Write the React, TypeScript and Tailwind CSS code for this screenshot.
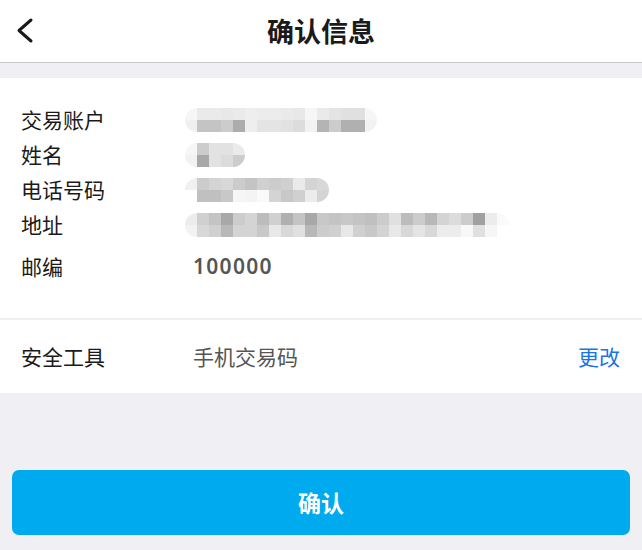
const cjk = "font-['PingFang_SC','Noto_Sans_CJK_SC',sans-serif]";

// mosaic blocks that stand in for the masked personal data
const mosaics: Record<string, string[][]> = {
  account: [
    ["f6", "ea", "ea", "e8", "ea", "ee", "ec", "ec", "ea", "e8", "f6", "ea", "e4", "e0", "e0", "f6"],
    ["f0", "c4", "c4", "cc", "ac", "ee", "e4", "e4", "e2", "dc", "f2", "b4", "cc", "b0", "b0", "f2"],
  ],
  name: [
    ["f6", "cc", "e2", "e2", "ea"],
    ["f2", "a8", "e2", "dc", "cc"],
  ],
  phone: [
    ["f0", "cc", "d4", "d8", "cc", "c4", "d0", "cc", "d0", "ea", "d4", "d8"],
    ["ff", "c0", "c0", "c8", "f6", "f4", "fa", "d4", "c8", "d0", "ec", "d4"],
  ],
  address: [
    ["ec", "d0", "c4", "a8", "cc", "d4", "bc", "d0", "b0", "c4", "a8", "c8", "c4", "c8", "c4", "c0", "cc", "e0", "bc", "cc", "b8", "d4", "dc", "cc", "a0", "ec", "fa"],
    ["f2", "d8", "d0", "b8", "d4", "d4", "c8", "e8", "d8", "e0", "b8", "cc", "d0", "e8", "d0", "c8", "d4", "e8", "d8", "e4", "d8", "ec", "ec", "f8", "e0", "f6", "ff"],
  ],
};

function Mosaic({ rows }: { rows: string[][] }) {
  return (
    <div className="-ml-2 flex flex-col overflow-hidden rounded-[12px] blur-[0.4px]">
      {rows.map((row, i) => (
        <div key={i} className="flex">
          {row.map((c, j) => (
            <div key={j} className="h-[12px] w-[12px]" style={{ backgroundColor: `#${c}${c}${c}` }} />
          ))}
        </div>
      ))}
    </div>
  );
}

function Row({ label, children, tall }: { label: string; children: React.ReactNode; tall?: boolean }) {
  return (
    <div className={`flex items-center ${tall ? "mt-[4px] h-[42px]" : "h-[35px]"}`}>
      <div className="w-[172px] text-[21px] text-[#1a1a1a]">{label}</div>
      <div className="flex items-center">{children}</div>
    </div>
  );
}

export default function App() {
  return (
    <div className={`min-h-[550px] w-[642px] bg-[#efeff4] ${cjk}`}>
      {/* Header */}
      <header className="relative flex h-[63px] items-center justify-center border-b border-[#c8c8cc] bg-white">
        <svg className="absolute left-0 top-0 h-[62px] w-[50px]" viewBox="0 0 50 62" fill="none">
          <polyline points="31,20 19,30.5 31,41" stroke="#1a1a1a" strokeWidth="3" strokeLinecap="round" strokeLinejoin="round" />
        </svg>
        <h1 className="text-[27px] font-bold text-[#1a1a1a]">确认信息</h1>
      </header>

      {/* Info card */}
      <section className="mt-[15px] bg-white pl-[21px] pt-[24px] pb-[30px]">
        <Row label="交易账户">
          <Mosaic rows={mosaics.account} />
        </Row>
        <Row label="姓名">
          <Mosaic rows={mosaics.name} />
        </Row>
        <Row label="电话号码">
          <Mosaic rows={mosaics.phone} />
        </Row>
        <Row label="地址">
          <Mosaic rows={mosaics.address} />
        </Row>
        <Row label="邮编" tall>
          <span className="font-['Noto_Sans',sans-serif] text-[21px] font-semibold tracking-[1.3px] text-[#555]">100000</span>
        </Row>
      </section>

      {/* Security tool */}
      <section className="mt-[2px] flex h-[73px] items-center bg-white pl-[21px] pr-[22px]">
        <div className="w-[172px] text-[21px] text-[#1a1a1a]">安全工具</div>
        <div className="flex-1 text-[21px] text-[#555]">手机交易码</div>
        <button className="text-[21px] text-[#1a73e8]">更改</button>
      </section>

      {/* Confirm */}
      <div className="px-[12px] pt-[77px] pb-[15px]">
        <button className="flex h-[65px] w-full items-center justify-center rounded-[7px] bg-[#00aaee] text-[23px] font-bold text-white">
          确认
        </button>
      </div>
    </div>
  );
}
